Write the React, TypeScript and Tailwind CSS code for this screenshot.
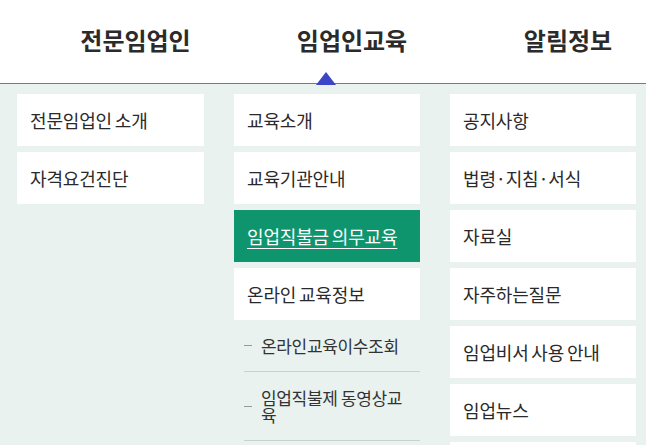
const font = { fontFamily: '"Noto Sans CJK KR", "Noto Sans", sans-serif' };

type Sub = { label: string };
type Item = { label: string; active?: boolean; subs?: Sub[] };

const menus: { title: string; items: Item[] }[] = [
  {
    title: "전문임업인",
    items: [{ label: "전문임업인 소개" }, { label: "자격요건진단" }],
  },
  {
    title: "임업인교육",
    items: [
      { label: "교육소개" },
      { label: "교육기관안내" },
      { label: "임업직불금 의무교육", active: true },
      {
        label: "온라인 교육정보",
        subs: [{ label: "온라인교육이수조회" }, { label: "임업직불제 동영상교육" }],
      },
    ],
  },
  {
    title: "알림정보",
    items: [
      { label: "공지사항" },
      { label: "법령·지침·서식" },
      { label: "자료실" },
      { label: "자주하는질문" },
      { label: "임업비서 사용 안내" },
      { label: "임업뉴스" },
      { label: "" },
    ],
  },
];

function MenuBox({ item }: { item: Item }) {
  return (
    <div
      className={
        "h-[52px] flex items-center px-[13px] text-[18px] tracking-[-0.01em] [word-spacing:-1px] " +
        (item.active ? "bg-[#0f956e] text-white underline underline-offset-4" : "bg-white text-[#2a2a2a]")
      }
    >
      {item.label}
    </div>
  );
}

export default function App() {
  return (
    <div className="w-[646px] h-[445px] overflow-hidden bg-white" style={font}>
      {/* top navigation */}
      <div className="h-[83px] grid grid-cols-[187px_186px_186px] gap-[30px] pl-[17px] relative">
        {menus.map((m, i) => (
          <div key={m.title} className="flex items-center justify-center pl-[50px] pb-[4px]">
            <span className="text-[24px] font-bold text-[#2b2b2b]">{m.title}</span>
            {i === 1 && (
              <span className="absolute left-[316px] bottom-[-2px] w-0 h-0 border-l-[10px] border-r-[10px] border-b-[13px] border-l-transparent border-r-transparent border-b-[#3b45c6]" />
            )}
          </div>
        ))}
      </div>
      <div className="h-px bg-[#7a7a7a]" />

      {/* dropdown panel */}
      <div className="bg-[#e9f2ef] h-full pt-[10px] pl-[17px] grid grid-cols-[187px_186px_186px] gap-[30px] items-start">
        {menus.map((m) => (
          <div key={m.title} className="flex flex-col gap-[6px]">
            {m.items.map((it, idx) => (
              <div key={idx}>
                <MenuBox item={it} />
                {it.subs && (
                  <div className="ml-[10px]">
                    {it.subs.map((s) => (
                      <div
                        key={s.label}
                        className="flex items-center border-b border-[#c9d1ce] py-[17px] text-[17px] leading-[17px] text-[#333] tracking-[-0.02em]"
                      >
                        <span className="w-[8px] h-px bg-[#999] mr-[9px] shrink-0" />
                        <span className="pr-[12px]">{s.label}</span>
                      </div>
                    ))}
                  </div>
                )}
              </div>
            ))}
          </div>
        ))}
      </div>
    </div>
  );
}
